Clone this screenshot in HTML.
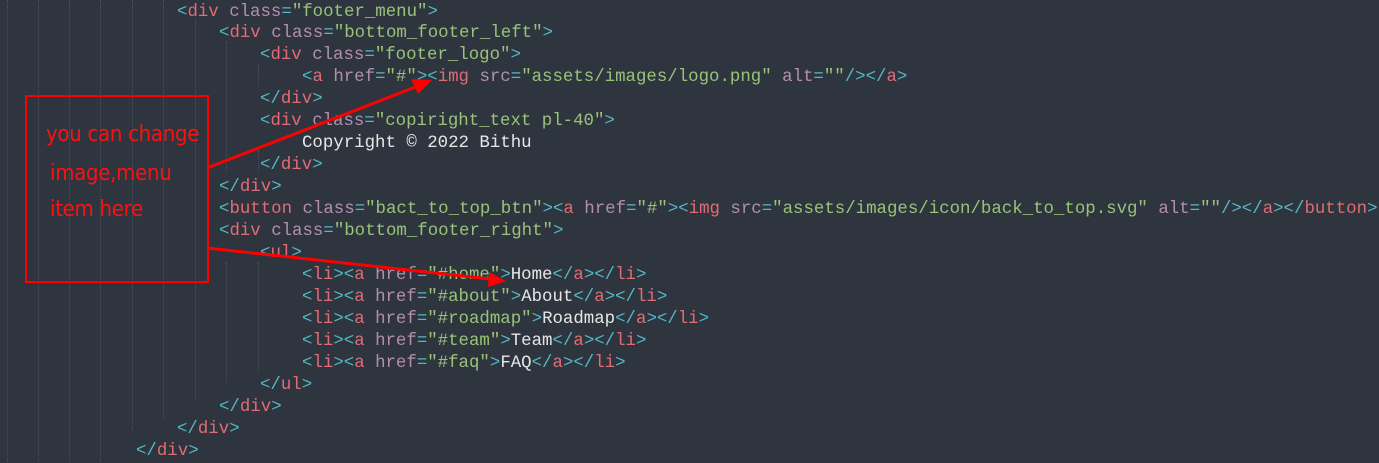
<!DOCTYPE html>
<html><head><meta charset="utf-8"><style>
html,body{margin:0;padding:0;background:#2e353f;width:1379px;height:462px;overflow:hidden}
.l{position:absolute;font-family:"Liberation Mono",monospace;font-size:17.4px;line-height:22px;white-space:pre;color:#dcdfe4;margin-top:2px}
.b{color:#56b6c2}.t{color:#e06c75}.a{color:#b48ead}.s{color:#98c379}.w{color:#e6e6e6}
.g{position:absolute;top:0;height:462px;border-left:1px dotted #4a525e}
.r{position:absolute;font-family:"Liberation Sans Narrow","DejaVu Sans Condensed","Liberation Sans",sans-serif;font-size:22px;color:#ff1010;letter-spacing:-0.3px}
</style></head><body>
<div class="g" style="left:7px"></div><div class="g" style="left:38px"></div><div class="g" style="left:69px"></div><div class="g" style="left:100px"></div><div class="g" style="left:132px;height:430px"></div><div class="g" style="left:163px;height:420px"></div><div class="g" style="left:195px;top:20px;height:380px"></div><div class="g" style="left:226px;top:42px;height:130px"></div><div class="g" style="left:226px;top:262px;height:120px"></div><div class="g" style="left:258px;top:64px;height:22px"></div><div class="g" style="left:258px;top:150px;height:22px"></div><div class="g" style="left:258px;top:262px;height:110px"></div>
<div class="l" style="left:177px;top:0"><span class="b">&lt;</span><span class="t">div</span> <span class="a">class</span><span class="b">=</span><span class="s">"footer_menu"</span><span class="b">&gt;</span></div>
<div class="l" style="left:219px;top:21px"><span class="b">&lt;</span><span class="t">div</span> <span class="a">class</span><span class="b">=</span><span class="s">"bottom_footer_left"</span><span class="b">&gt;</span></div>
<div class="l" style="left:260px;top:43px"><span class="b">&lt;</span><span class="t">div</span> <span class="a">class</span><span class="b">=</span><span class="s">"footer_logo"</span><span class="b">&gt;</span></div>
<div class="l" style="left:302px;top:65px"><span class="b">&lt;</span><span class="t">a</span> <span class="a">href</span><span class="b">=</span><span class="s">"#"</span><span class="b">&gt;&lt;</span><span class="t">img</span> <span class="a">src</span><span class="b">=</span><span class="s">"assets/images/logo.png"</span> <span class="a">alt</span><span class="b">=</span><span class="s">""</span><span class="b">/&gt;&lt;/</span><span class="t">a</span><span class="b">&gt;</span></div>
<div class="l" style="left:260px;top:87px"><span class="b">&lt;/</span><span class="t">div</span><span class="b">&gt;</span></div>
<div class="l" style="left:260px;top:109px"><span class="b">&lt;</span><span class="t">div</span> <span class="a">class</span><span class="b">=</span><span class="s">"copiright_text pl-40"</span><span class="b">&gt;</span></div>
<div class="l w" style="left:302px;top:131px">Copyright © 2022 Bithu</div>
<div class="l" style="left:260px;top:153px"><span class="b">&lt;/</span><span class="t">div</span><span class="b">&gt;</span></div>
<div class="l" style="left:219px;top:175px"><span class="b">&lt;/</span><span class="t">div</span><span class="b">&gt;</span></div>
<div class="l" style="left:219px;top:197px"><span class="b">&lt;</span><span class="t">button</span> <span class="a">class</span><span class="b">=</span><span class="s">"bact_to_top_btn"</span><span class="b">&gt;&lt;</span><span class="t">a</span> <span class="a">href</span><span class="b">=</span><span class="s">"#"</span><span class="b">&gt;&lt;</span><span class="t">img</span> <span class="a">src</span><span class="b">=</span><span class="s">"assets/images/icon/back_to_top.svg"</span> <span class="a">alt</span><span class="b">=</span><span class="s">""</span><span class="b">/&gt;&lt;/</span><span class="t">a</span><span class="b">&gt;&lt;/</span><span class="t">button</span><span class="b">&gt;</span></div>
<div class="l" style="left:219px;top:219px"><span class="b">&lt;</span><span class="t">div</span> <span class="a">class</span><span class="b">=</span><span class="s">"bottom_footer_right"</span><span class="b">&gt;</span></div>
<div class="l" style="left:260px;top:241px"><span class="b">&lt;</span><span class="t">ul</span><span class="b">&gt;</span></div>
<div class="l" style="left:302px;top:263px"><span class="b">&lt;</span><span class="t">li</span><span class="b">&gt;&lt;</span><span class="t">a</span> <span class="a">href</span><span class="b">=</span><span class="s">"#home"</span><span class="b">&gt;</span><span class="w">Home</span><span class="b">&lt;/</span><span class="t">a</span><span class="b">&gt;&lt;/</span><span class="t">li</span><span class="b">&gt;</span></div>
<div class="l" style="left:302px;top:285px"><span class="b">&lt;</span><span class="t">li</span><span class="b">&gt;&lt;</span><span class="t">a</span> <span class="a">href</span><span class="b">=</span><span class="s">"#about"</span><span class="b">&gt;</span><span class="w">About</span><span class="b">&lt;/</span><span class="t">a</span><span class="b">&gt;&lt;/</span><span class="t">li</span><span class="b">&gt;</span></div>
<div class="l" style="left:302px;top:307px"><span class="b">&lt;</span><span class="t">li</span><span class="b">&gt;&lt;</span><span class="t">a</span> <span class="a">href</span><span class="b">=</span><span class="s">"#roadmap"</span><span class="b">&gt;</span><span class="w">Roadmap</span><span class="b">&lt;/</span><span class="t">a</span><span class="b">&gt;&lt;/</span><span class="t">li</span><span class="b">&gt;</span></div>
<div class="l" style="left:302px;top:329px"><span class="b">&lt;</span><span class="t">li</span><span class="b">&gt;&lt;</span><span class="t">a</span> <span class="a">href</span><span class="b">=</span><span class="s">"#team"</span><span class="b">&gt;</span><span class="w">Team</span><span class="b">&lt;/</span><span class="t">a</span><span class="b">&gt;&lt;/</span><span class="t">li</span><span class="b">&gt;</span></div>
<div class="l" style="left:302px;top:351px"><span class="b">&lt;</span><span class="t">li</span><span class="b">&gt;&lt;</span><span class="t">a</span> <span class="a">href</span><span class="b">=</span><span class="s">"#faq"</span><span class="b">&gt;</span><span class="w">FAQ</span><span class="b">&lt;/</span><span class="t">a</span><span class="b">&gt;&lt;/</span><span class="t">li</span><span class="b">&gt;</span></div>
<div class="l" style="left:260px;top:373px"><span class="b">&lt;/</span><span class="t">ul</span><span class="b">&gt;</span></div>
<div class="l" style="left:219px;top:395px"><span class="b">&lt;/</span><span class="t">div</span><span class="b">&gt;</span></div>
<div class="l" style="left:177px;top:417px"><span class="b">&lt;/</span><span class="t">div</span><span class="b">&gt;</span></div>
<div class="l" style="left:136px;top:439px"><span class="b">&lt;/</span><span class="t">div</span><span class="b">&gt;</span></div>
<div style="position:absolute;left:25px;top:95px;width:180px;height:184px;border:2px solid #ff0000"></div>
<div class="r" style="left:46px;top:122px">you can change</div>
<div class="r" style="left:50px;top:161px">image,menu</div>
<div class="r" style="left:50px;top:197px">item here</div>
<svg style="position:absolute;left:0;top:0" width="1379" height="462">
<line x1="207" y1="168" x2="418" y2="86" stroke="#ff0000" stroke-width="3"/>
<polygon points="432,80 411,79 418,94" fill="#ff0000"/>
<line x1="207" y1="248" x2="490" y2="279" stroke="#ff0000" stroke-width="3"/>
<polygon points="506,281 489,272 488,287" fill="#ff0000"/>
</svg>
</body></html>
